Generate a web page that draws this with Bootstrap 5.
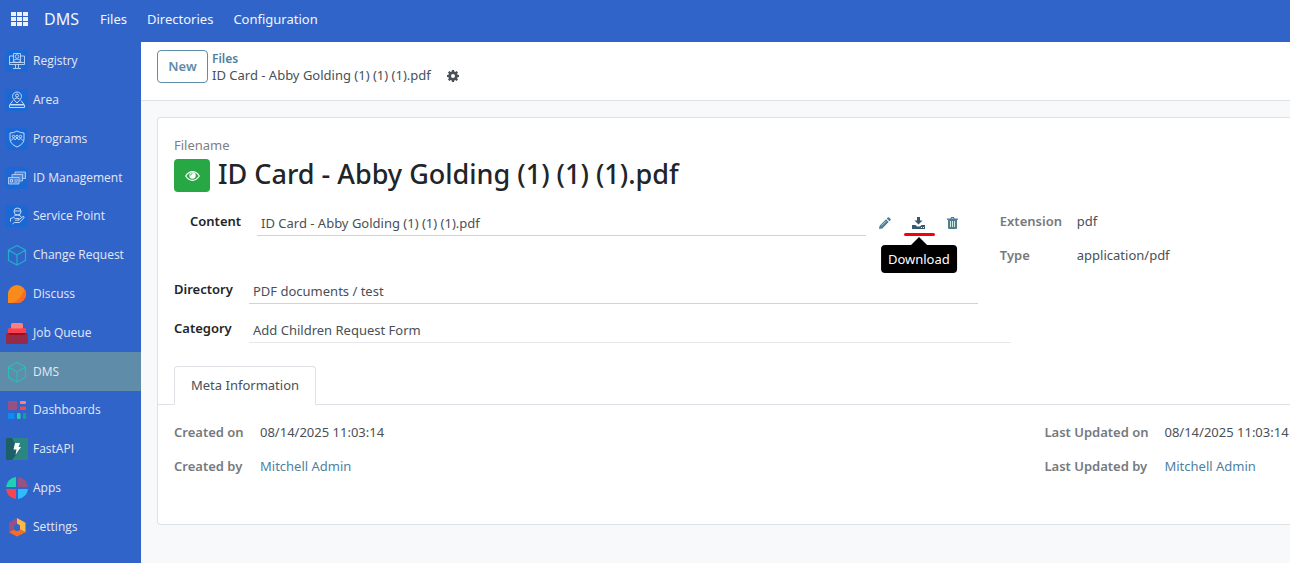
<!DOCTYPE html>
<html lang="en">
<head>
<meta charset="utf-8">
<meta name="viewport" content="width=device-width, initial-scale=1">
<title>DMS - Files</title>
<link href="https://cdn.jsdelivr.net/npm/bootstrap@5.3.0/dist/css/bootstrap.min.css" rel="stylesheet">
<style>
  :root { --brand: #3164c8; --accent: #5f8ca8; --teal: #4c7d99; --ink: #495057; --line: #dee2e6; }
  body { font-family: "Noto Sans", "Open Sans", sans-serif; font-size: 13px; line-height: 20px; color: var(--ink); background: #f8f9fa; }
  a { color: #4f7f9f; text-decoration: none; }
  .topbar { background: var(--brand); height: 42px; padding: 0 10px 4px; }
  .topbar a, .topbar button { color: #f2f5fb; }
  .topbar .navbar-brand { font-size: 16px; padding: 0; margin: 0 11px 0 14px; }
  .topbar .nav-link { padding: 0 10px; }
  .side { background: var(--brand); width: 141px; padding-bottom: 17px; font-family: "Open Sans", "Noto Sans", sans-serif; font-size: 12px; }
  .side li { flex: 1 1 0; min-height: 30px; max-height: 39px; }
  .side a { color: #e3e9f7; height: 100%; padding-left: 6px; gap: 5px; }
  .side a.active { background: var(--accent); }
  .side svg { width: 22px; height: 22px; flex: none; }
  .controls { background: #fff; border-bottom: 1px solid var(--line); padding: 8px 16px 16px; gap: 4px; }
  .btn-new { border: 1px solid var(--accent); color: var(--accent); font-weight: 600; font-size: 13px; line-height: 19px; padding: 6px 10px; border-radius: 4px; min-width: 51px; }
  .crumbs { line-height: 17px; }
  .crumbs a { font-weight: 600; font-size: 12px; }
  .btn-icon { border: 0; background: none; padding: 0; color: var(--teal); display: inline-flex; align-items: center; justify-content: center; }
  .sheet { background: #fff; border: 1px solid var(--line); border-right: 0; border-radius: 4px 0 0 4px; margin: 16px 0 0 16px; padding: 17px 0 48px 16px; }
  .muted-label { color: #7c8084; }
  .btn-eye { background: #28a745; width: 36px; height: 33px; padding: 0; border-radius: 4px; }
  .title-text { font-size: 27px; line-height: 30px; font-weight: 500; color: #212529; margin: 0; }
  .group-row { margin-top: 19px; }
  .group-main { width: 74%; }
  .lbl { font-weight: 600; color: #212529; flex: none; }
  .lbl.soft { color: #76797d; }
  .field { border: 0; border-bottom: 1px solid #ced4da; border-radius: 0; background: none; color: var(--ink); padding: 2px 4px; line-height: 20px; min-width: 0; flex: 1; outline: 0; }
  .field.faint { border-color: #e6e8eb; }
  .w-label { width: 75px; }
  .w-content { width: 67px; }
  .w-ext { width: 77px; }
  .w-created { width: 86px; }
  .w-updated { width: 120px; }
  .tools { width: 134px; padding-left: 2px; }
  .tools .btn-icon { width: 34px; height: 24px; position: relative; }
  .tools .current { color: #38596d; }
  .mark-line { position: absolute; left: 2px; right: 1px; bottom: -1px; height: 3px; border-radius: 2px; background: #f5000f; }
  .tip { position: absolute; top: 34px; left: 50%; transform: translateX(-50%); background: #000; color: #fff; border-radius: 4px; padding: 4px 7px; line-height: 20px; }
  .tip::before { content: ""; position: absolute; bottom: 100%; left: 50%; margin-left: -8px; border: 8px solid transparent; border-top: 0; border-bottom-color: #000; }
  .row-dir { width: 72%; margin-top: 14px; }
  .row-cat { width: 75%; margin-top: 14px; }
  .meta-tabs { margin: 23px 0 0 -16px; padding-left: 16px; border-bottom: 1px solid var(--line); }
  .meta-tabs .nav-link { padding: 8px 16px 9px; color: var(--ink); min-width: 142px; border-radius: 4px 4px 0 0; }
  .meta-tabs .nav-link.active { color: var(--ink); border-color: var(--line) var(--line) #fff; }
  .meta-left { width: 78%; }
  .meta-row { padding-top: 17px; }
  .stack { row-gap: 14px; }
</style>
</head>
<body class="min-vh-100 d-flex flex-column overflow-x-hidden">
<svg class="d-none">
  <symbol id="cube" viewBox="0 0 22 22"><path d="M11 1.500 19.500 6v10.500L11 21 2.500 16.500V6zM2.500 6 11 11l8.500-5M11 11v10" fill="none" stroke="currentColor" stroke-width="1.200" stroke-linejoin="round"/></symbol>
</svg>

<nav class="topbar d-flex align-items-center">
  <button class="btn-icon" type="button" aria-label="Apps menu">
    <svg width="20" height="14" viewBox="0 0 20 14" fill="#edf1fa"><path d="M1 0h5v4H1zM7 0h5v4H7zM13 0h5v4h-5zM1 5h5v4H1zM7 5h5v4H7zM13 5h5v4h-5zM1 10h5v4H1zM7 10h5v4H7zM13 10h5v4h-5z"/></svg>
  </button>
  <a class="navbar-brand" href="#">DMS</a>
  <a class="nav-link" href="#">Files</a>
  <a class="nav-link" href="#">Directories</a>
  <a class="nav-link" href="#">Configuration</a>
</nav>

<div class="d-flex flex-grow-1">
  <aside class="side flex-shrink-0 d-flex">
    <ul class="list-unstyled d-flex flex-column flex-fill m-0">
      <li><a class="d-flex align-items-center" href="#"><svg viewBox="0 0 22 22"><path fill="#1b68d4" d="M0 0h22v22H0z"/><g fill="none" stroke="#d6e4fa" stroke-width=".8"><path d="M7.500 6H3.500v8.500h15V6h-4M3.500 12.500h15M7.500 10.500V3.500h7v7M9.500 14.500V18M12.500 14.500V18M7 18.500h8"/><circle cx="11" cy="6.500" r="1.800"/><path d="M7 11.500q1-2.500 4-2.500t4 2.500l-4 1z"/></g></svg><span>Registry</span></a></li>
      <li><a class="d-flex align-items-center" href="#"><svg viewBox="0 0 22 22"><path fill="#1b68d4" d="M0 0h22v22H0z"/><g fill="none" stroke="#d6e4fa" stroke-width=".9"><path d="M11 14Q6.500 9.500 6.500 7.500a4.500 4.500 0 0 1 9 0Q15.500 9.500 11 14zM7 11.500l-3 4h14l-3-4M3.500 16h15v2.500h-15z"/><circle cx="11" cy="6.500" r="1.500"/><path d="M8.500 10q2.500-2.500 5 0"/></g></svg><span>Area</span></a></li>
      <li><a class="d-flex align-items-center" href="#"><svg viewBox="0 0 22 22"><path fill="#1b68d4" d="M0 0h22v22H0z"/><g fill="none" stroke="#d6e4fa" stroke-width=".9"><path d="M11 3q3.500 2 7 2v6q0 5-7 8-7-3-7-8V5q3.500 0 7-2z"/><circle cx="7.500" cy="8.500" r="1.200"/><circle cx="11" cy="8.500" r="1.200"/><circle cx="14.500" cy="8.500" r="1.200"/><path d="M5.500 12.500q2-4 3.700-.5 1.800-3.500 3.600 0 1.700-3.500 3.700.5"/></g></svg><span>Programs</span></a></li>
      <li><a class="d-flex align-items-center" href="#"><svg viewBox="0 0 22 22"><path fill="#1b68d4" d="M0 0h22v22H0z"/><g fill="#4a86dc" stroke="#c4d8f6" stroke-width=".8"><path d="M9 5h10.500v6.500H9z"/><path d="M6 7.500h10.500V14H6z"/><path d="M2.500 10.500h10.500V17H2.500zM4.500 12.500h2v2.500h-2zM8.500 13h3M8.500 15h3"/></g></svg><span>ID Management</span></a></li>
      <li><a class="d-flex align-items-center" href="#"><svg viewBox="0 0 22 22"><path fill="#1b68d4" d="M0 0h22v22H0z"/><g fill="none" stroke="#d6e4fa" stroke-width=".9"><circle cx="11.500" cy="6.500" r="3.500"/><path d="M8 6h7M8 11.500q0-1.500 3.500-1.500t3.500 2M4.500 13.500q3-2 5 0H13q1 1.500-1 1.700H9M12.500 15l4.500-3.500q1.500 0 1 1.200L13.500 17.500H8.500l-2 1.500M4.500 13.500v3"/></g></svg><span>Service Point</span></a></li>
      <li><a class="d-flex align-items-center" href="#"><svg color="#1fb0c8"><use href="#cube"/></svg><span>Change Request</span></a></li>
      <li><a class="d-flex align-items-center" href="#"><svg viewBox="0 0 22 22"><path fill="#f98b1d" d="M2 20V11a9 9 0 1 1 9 9z"/><path fill="#fb6b25" d="M18.500 6A9 9 0 0 1 11 20H6q9-3 12.500-14z"/></svg><span>Discuss</span></a></li>
      <li><a class="d-flex align-items-center" href="#"><svg viewBox="0 0 22 22"><rect y="11" width="22" height="11" rx="1.500" fill="#962b48"/><rect x="2" y="6" width="18" height="7" rx="1.500" fill="#f9414e"/><path fill="#9b0d22" d="M2 11h18v1l-1 1H3l-1-1z"/><rect x="5" y="1" width="12" height="5.500" rx="1.500" fill="#fb8080"/></svg><span>Job Queue</span></a></li>
      <li><a class="d-flex align-items-center active" href="#" aria-current="page"><svg color="#2bbdb4"><use href="#cube"/></svg><span>DMS</span></a></li>
      <li><a class="d-flex align-items-center" href="#"><svg viewBox="0 0 22 22"><rect x="2" y="2" width="9" height="9" rx="1" fill="#985184"/><rect x="14" y="2" width="6" height="3" rx="1" fill="#fb8080"/><rect x="14" y="7.500" width="6" height="3.500" rx="1" fill="#f9464c"/><rect x="2" y="14" width="6.500" height="6" rx="1" fill="#0b8bf5"/><rect x="11" y="14" width="3.500" height="6" rx="1" fill="#1fd0b5"/><rect x="17" y="14" width="3" height="6" rx="1" fill="#0aa890"/></svg><span>Dashboards</span></a></li>
      <li><a class="d-flex align-items-center" href="#"><svg viewBox="0 0 22 22"><path fill="#2b8580" d="M0 0h22v22H0z"/><path fill="#1c5f66" d="M0 0h6Q10 8 14 12L6 22H0z"/><path fill="#fff" d="M9 5h5l-1.500 4H15l-5.500 8 1-5.500H7.500z"/></svg><span>FastAPI</span></a></li>
      <li><a class="d-flex align-items-center" href="#"><svg viewBox="0 0 22 22"><path fill="#1fd0b5" d="M10 0v10H0A11 11 0 0 1 10 0z"/><path fill="#985184" d="M12 0v10h10A11 11 0 0 0 12 0z"/><path fill="#f9464c" d="M10 22V12H0a11 11 0 0 0 10 10z"/><path fill="#2fbcfb" d="M12 22V12h10a11 11 0 0 1-10 10z"/></svg><span>Apps</span></a></li>
      <li><a class="d-flex align-items-center" href="#"><svg viewBox="0 0 22 22"><path fill="#985184" d="M11 2v5.500L8 9.500v4L3 16.200V6.800z"/><path fill="#fbb945" d="M11 2l8.500 4.800v9.400L14 13.500v-4l-3-2z"/><path fill="#fb6b25" d="M3 16.200l5-2.700q3 3 6 0l5.500 2.700L11 20.500z"/></svg><span>Settings</span></a></li>
    </ul>
  </aside>

  <main class="flex-grow-1">
    <div class="controls d-flex align-items-start">
      <button class="btn btn-new" type="button">New</button>
      <div class="crumbs">
        <div><a href="#">Files</a></div>
        <div class="d-flex align-items-center gap-3">
          <span>ID Card - Abby Golding (1) (1) (1).pdf</span>
          <button class="btn-icon" type="button" aria-label="Actions">
            <svg width="12" height="12" viewBox="0 0 12 12"><path fill="#495057" fill-rule="evenodd" d="M5 0h2l.3 1.500 1 .4L9.600 1 11 2.400l-.9 1.300.4 1L12 5v2l-1.500.3-.4 1 .9 1.300L9.600 11l-1.300-.9-1 .4L7 12H5l-.3-1.500-1-.4-1.300.9L1 9.600l.9-1.300-.4-1L0 7V5l1.500-.3.4-1L1 2.400 2.400 1l1.300.9 1-.4zM6 4a2 2 0 1 0 0 4 2 2 0 0 0 0-4z"/></svg>
          </button>
        </div>
      </div>
    </div>

    <section class="sheet">
      <div class="muted-label">Filename</div>
      <div class="d-flex align-items-start gap-2 mt-1">
        <button class="btn btn-eye d-flex align-items-center justify-content-center" type="button" aria-label="Preview">
          <svg width="15" height="10" viewBox="0 0 15 10"><path d="M.7 5Q3.500.7 7.500.7T14.300 5Q11.500 9.300 7.500 9.300T.7 5z" fill="none" stroke="#fff" stroke-width="1.200"/><circle cx="7.500" cy="4.500" r="3.200" fill="#fff"/><path d="M5.500 4.500a2 2 0 0 1 2-2" fill="none" stroke="#28a745" stroke-width=".8"/></svg>
        </button>
        <h1 class="title-text">ID Card - Abby Golding (1) (1) (1).pdf</h1>
      </div>

      <div class="group-row d-flex">
        <div class="group-main d-flex ps-3 align-items-start">
          <label class="lbl w-content" for="content">Content</label>
          <input class="field" id="content" type="text" value="ID Card - Abby Golding (1) (1) (1).pdf">
          <div class="tools d-flex flex-shrink-0">
            <button class="btn-icon" type="button" aria-label="Edit">
              <svg width="12" height="12" viewBox="0 0 12 12"><path fill="currentColor" d="M0 12 .6 8.700 7 2.300 9.700 5 3.300 11.400zM7.700 1.600 8.700.6q.8-.7 1.500 0l1.200 1.200q.7.700 0 1.500l-1 1z"/><path d="M2.500 8.700 7 4.200" stroke="#fff" stroke-width=".6"/></svg>
            </button>
            <button class="btn-icon current" type="button" aria-label="Download" aria-describedby="tip">
              <svg width="13" height="12" viewBox="0 0 13 12"><path fill="currentColor" d="M5 0h3v3.500h2.500L6.500 7.500l-4-4H5zM0 8h3.500l1.500 1.500h3L9.500 8H13v4H0z"/><path fill="#fff" d="M9 10h1v1H9zM11 10h1v1h-1z"/></svg>
              <span class="mark-line"></span>
              <span class="tip" id="tip" role="tooltip">Download</span>
            </button>
            <button class="btn-icon" type="button" aria-label="Delete">
              <svg width="11" height="12" viewBox="0 0 11 12"><path fill="currentColor" fill-rule="evenodd" d="M3.500 1.500 4 0h3l.5 1.500H11v1.300h-1V11q0 1-1 1H2q-1 0-1-1V2.800H0V1.500zM4.500 1.500h2L6.200.9H4.800z"/><path fill="#d5ecd8" d="M3 4h1v6H3zM5 4h1v6H5zM7 4h1v6H7z"/></svg>
            </button>
          </div>
        </div>
        <div class="d-flex flex-column stack">
          <div class="d-flex"><span class="lbl soft w-ext">Extension</span><span>pdf</span></div>
          <div class="d-flex"><span class="lbl soft w-ext">Type</span><span>application/pdf</span></div>
        </div>
      </div>

      <div class="row-dir d-flex align-items-start">
        <label class="lbl w-label" for="directory">Directory</label>
        <input class="field" id="directory" type="text" value="PDF documents / test">
      </div>
      <div class="row-cat d-flex align-items-start">
        <label class="lbl w-label" for="category">Category</label>
        <input class="field faint" id="category" type="text" value="Add Children Request Form">
      </div>

      <ul class="nav nav-tabs meta-tabs">
        <li class="nav-item"><a class="nav-link active text-center" href="#">Meta Information</a></li>
      </ul>

      <div class="meta-row d-flex text-nowrap">
        <div class="meta-left d-flex flex-column stack flex-shrink-0">
          <div class="d-flex"><span class="lbl soft w-created">Created on</span><span>08/14/2025 11:03:14</span></div>
          <div class="d-flex"><span class="lbl soft w-created">Created by</span><a href="#">Mitchell Admin</a></div>
        </div>
        <div class="d-flex flex-column stack">
          <div class="d-flex"><span class="lbl soft w-updated">Last Updated on</span><span>08/14/2025 11:03:14</span></div>
          <div class="d-flex"><span class="lbl soft w-updated">Last Updated by</span><a href="#">Mitchell Admin</a></div>
        </div>
      </div>
    </section>
  </main>
</div>
<script src="https://cdn.jsdelivr.net/npm/bootstrap@5.3.0/dist/js/bootstrap.bundle.min.js"></script>
</body>
</html>
